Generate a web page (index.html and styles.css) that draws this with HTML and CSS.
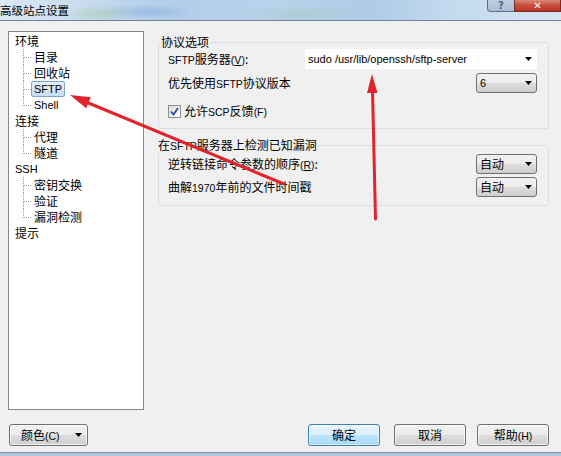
FILE: index.html
```html
<!DOCTYPE html>
<html lang="zh-CN">
<head>
<meta charset="utf-8">
<title>高级站点设置</title>
<link rel="stylesheet" href="styles.css">
</head>
<body>
<div class="window">
  <div class="titlebar">
    <span class="title">高级站点设置</span>
    <div class="caption-btns">
      <span class="cbtn help">?</span>
      <span class="cbtn close">✕</span>
    </div>
  </div>

  <div class="main">
    <ul class="tree">
      <li><span class="lbl">环境</span>
        <ul class="children">
          <li><span class="lbl">目录</span></li>
          <li><span class="lbl">回收站</span></li>
          <li><span class="lbl sel lat">SFTP</span></li>
          <li><span class="lbl lat">Shell</span></li>
        </ul>
      </li>
      <li><span class="lbl">连接</span>
        <ul class="children">
          <li><span class="lbl">代理</span></li>
          <li><span class="lbl">隧道</span></li>
        </ul>
      </li>
      <li><span class="lbl lat">SSH</span>
        <ul class="children">
          <li><span class="lbl">密钥交换</span></li>
          <li><span class="lbl">验证</span></li>
          <li><span class="lbl">漏洞检测</span></li>
        </ul>
      </li>
      <li><span class="lbl">提示</span></li>
    </ul>

    <div class="pane">
      <fieldset class="group g1">
        <legend>协议选项</legend>
        <div class="row r1">
          <span class="label"><span class="lat">SFTP</span>服务器<span class="lat">(<u>V</u>)</span>:</span>
          <div class="combo edit">
            <span class="val val-lat">sudo /usr/lib/openssh/sftp-server</span>
            <svg class="arrow" width="7" height="4" viewBox="0 0 7 4"><polygon points="0,0 7,0 3.5,4" fill="#000"/></svg>
          </div>
        </div>
        <div class="row r2">
          <span class="label">优先使用<span class="lat">SFTP</span>协议版本</span>
          <div class="combo drop small">
            <span class="val val-lat">6</span>
            <svg class="arrow" width="7" height="4" viewBox="0 0 7 4"><polygon points="0,0 7,0 3.5,4" fill="#000"/></svg>
          </div>
        </div>
        <div class="row r3">
          <span class="check">
            <svg width="9" height="9" viewBox="0 0 9 9"><path d="M1 4.5 L3.5 7.5 L8 1" fill="none" stroke="#2a4f9a" stroke-width="1.8"/></svg>
          </span>
          <span class="label">允许<span class="lat">SCP</span>反馈<span class="lat">(F)</span></span>
        </div>
      </fieldset>

      <fieldset class="group g2">
        <legend>在<span class="lat">SFTP</span>服务器上检测已知漏洞</legend>
        <div class="row r1">
          <span class="label">逆转链接命令参数的顺序<span class="lat">(<u>R</u>)</span>:</span>
          <div class="combo drop small">
            <span class="val">自动</span>
            <svg class="arrow" width="7" height="4" viewBox="0 0 7 4"><polygon points="0,0 7,0 3.5,4" fill="#000"/></svg>
          </div>
        </div>
        <div class="row r2b">
          <span class="label">曲解<span class="lat">1970</span>年前的文件时间戳</span>
          <div class="combo drop small">
            <span class="val">自动</span>
            <svg class="arrow" width="7" height="4" viewBox="0 0 7 4"><polygon points="0,0 7,0 3.5,4" fill="#000"/></svg>
          </div>
        </div>
      </fieldset>
    </div>
  </div>

  <div class="footer">
    <button class="btn color-btn"><span>颜色<span class="lat">(C)</span></span>
      <svg class="arrow" width="7" height="4" viewBox="0 0 7 4"><polygon points="0,0 7,0 3.5,4" fill="#000"/></svg>
    </button>
    <button class="btn ok">确定</button>
    <button class="btn cancel">取消</button>
    <button class="btn help-btn">帮助<span class="lat">(H)</span></button>
  </div>
  <div class="frame-bottom"></div>
</div>

<svg class="arrows" width="561" height="456" viewBox="0 0 561 456">
  <line x1="284" y1="184" x2="86" y2="102" stroke="#e2232b" stroke-width="3" stroke-linecap="round"/>
  <polygon points="70,95 90.8,97.2 86.2,108.2" fill="#e2232b"/>
  <line x1="375.5" y1="219" x2="372.5" y2="90" stroke="#e2232b" stroke-width="3" stroke-linecap="round"/>
  <polygon points="372,74 377.5,93 367,93" fill="#e2232b"/>
</svg>
</body>
</html>
```

FILE: styles.css
```css
* { box-sizing: border-box; }

html, body {
  margin: 0;
  padding: 0;
}

body {
  width: 561px;
  height: 456px;
  overflow: hidden;
  background: #f0f0f0;
  font-family: "Noto Sans CJK SC", "Liberation Sans", sans-serif;
  font-size: 12px;
  color: #000;
  position: relative;
}

.lat {
  font-family: "Liberation Sans", Arial, sans-serif;
  font-size: 10.5px;
}

.val-lat {
  font-family: "Liberation Sans", Arial, sans-serif;
  font-size: 11px;
}

.window {
  width: 561px;
  height: 456px;
  display: flex;
  flex-direction: column;
}

/* ---------- title bar ---------- */
.titlebar {
  height: 21px;
  flex: none;
  display: flex;
  align-items: flex-start;
  justify-content: space-between;
  border-bottom: 1px solid #6f8296;
  background:
    radial-gradient(ellipse 40px 10px at 100px 14px, rgba(170,205,175,0.55), transparent),
    radial-gradient(ellipse 60px 10px at 300px 14px, rgba(160,200,180,0.45), transparent),
    radial-gradient(ellipse 50px 8px at 145px 12px, rgba(120,170,220,0.5), transparent),
    linear-gradient(to right, #dce8f4 0%, #cadcef 14%, #b3cdea 30%, #b9d2ec 50%, #aecbe8 66%, #c6dbef 82%, #d7e5f3 100%);
}

.title {
  font-size: 11.5px;
  line-height: 14px;
  padding-top: 3px;
  color: #000;
}

.caption-btns {
  display: flex;
  height: 12px;
}

.cbtn {
  display: flex;
  align-items: flex-end;
  justify-content: center;
  height: 12px;
  font-family: "DejaVu Sans", sans-serif;
  font-size: 10px;
  line-height: 10px;
  font-weight: bold;
  border: 1px solid #5b6e86;
  border-top: none;
}

.cbtn.help {
  width: 27px;
  border-radius: 0 0 0 4px;
  color: #51637a;
  background: linear-gradient(#bfd0e3, #a9bdd6);
  border-right: none;
}

.cbtn.close {
  width: 47px;
  color: #fff;
  border-color: #7b2a22;
  background: linear-gradient(#d98a7e 0%, #c9513f 45%, #b93221 100%);
}

/* ---------- main ---------- */
.main {
  flex: none;
  display: flex;
  padding: 10px 0 0 8px;
}

.tree {
  list-style: none;
  margin: 0;
  width: 136px;
  height: 379px;
  background: #fff;
  border: 1px solid #828790;
  padding: 1px 0 0 3px;
}

.tree ul {
  list-style: none;
  margin: 0;
}

.tree li {
  line-height: 16px;
}

.lbl {
  display: inline-block;
  height: 16px;
  line-height: 14px;
  padding: 0 2px;
  border: 1px solid transparent;
  border-radius: 2px;
  white-space: nowrap;
  vertical-align: top;
}

.lbl.lat {
  font-size: 11px;
}

.lbl.sel {
  border-color: #7da2ce;
  background: linear-gradient(#e4effd, #c7dcf6);
}

.children {
  padding: 0 0 0 19px;
}

.children li {
  position: relative;
  height: 16px;
}

.children li::before {
  content: "";
  position: absolute;
  left: -8px;
  top: 0;
  width: 7px;
  height: 8px;
  border-left: 1px dotted #a0a0a0;
  border-bottom: 1px dotted #a0a0a0;
}

.children li:not(:last-child)::after {
  content: "";
  position: absolute;
  left: -8px;
  top: 8px;
  height: 8px;
  border-left: 1px dotted #a0a0a0;
}

/* ---------- right pane ---------- */
.pane {
  margin-left: 14px;
  width: 391px;
  display: flex;
  flex-direction: column;
}

.group {
  margin: 0;
  border: 1px solid #d5dfe5;
  border-radius: 3px;
  min-inline-size: 0;
}

.group legend {
  font-size: 12px;
  line-height: 14px;
  padding: 0 1px;
}

.g1 {
  margin-top: 4px;
  padding: 0 11px 9px 9px;
}

.g1 legend { margin-left: -8px; }

.g2 {
  margin-top: 9px;
  padding: 1px 11px 8px 9px;
}

.g2 legend { margin-left: -11px; }

.row {
  display: flex;
  align-items: center;
  height: 20px;
}

.row .label {
  line-height: 16px;
  white-space: nowrap;
}

.r2 { margin-top: 4px; }
.r2b { margin-top: 3px; }
.r3 { margin-top: 10px; height: 16px; }

.combo {
  margin-left: auto;
  height: 20px;
  display: flex;
  align-items: center;
  justify-content: space-between;
  line-height: 16px;
}

.combo .arrow {
  margin-right: 5px;
  flex: none;
}

.combo.edit {
  width: 232px;
  background: #fff;
  padding-left: 3px;
}

.combo.drop {
  width: 61px;
  border: 1px solid #707070;
  border-radius: 3px;
  padding-left: 3px;
  background: linear-gradient(#f2f2f2 0%, #ebebeb 50%, #dddddd 51%, #cfcfcf 100%);
}

.combo.drop .arrow { margin-right: 4px; }

.check {
  width: 13px;
  height: 13px;
  border: 1px solid #8e8f8f;
  background: linear-gradient(135deg, #dcdcdc, #fdfdfd);
  display: flex;
  align-items: center;
  justify-content: center;
  margin-right: 3px;
}

/* ---------- footer ---------- */
.footer {
  flex: none;
  display: flex;
  margin-top: 14px;
  padding: 0 12px 0 9px;
}

.btn {
  height: 22px;
  width: 72px;
  font-family: "Noto Sans CJK SC", "Liberation Sans", sans-serif;
  font-size: 12px;
  line-height: 16px;
  color: #000;
  padding: 0;
  border: 1px solid #707070;
  border-radius: 3px;
  background: linear-gradient(#f2f2f2 0%, #ebebeb 50%, #dddddd 51%, #cfcfcf 100%);
  box-shadow: inset 0 0 0 1px rgba(255,255,255,0.7);
}

.color-btn {
  width: 79px;
  display: flex;
  align-items: center;
  justify-content: space-between;
  padding: 0 5px 0 11px;
}

.ok {
  margin-left: auto;
  border-color: #3c7fb1;
  background: linear-gradient(#eaf6fd 0%, #d9f0fc 50%, #bee6fd 51%, #a7d9f5 100%);
  box-shadow: inset 0 0 0 1px rgba(255,255,255,0.6);
}

.cancel { margin-left: 14px; }
.help-btn { margin-left: 11px; }

.frame-bottom {
  margin-top: auto;
  height: 4px;
  flex: none;
  background: linear-gradient(#7f93a9 0, #7f93a9 1px, #aec2d8 1px, #b9cbe0 100%);
}

/* ---------- annotation arrows ---------- */
.arrows {
  position: absolute;
  left: 0;
  top: 0;
  pointer-events: none;
}
```
